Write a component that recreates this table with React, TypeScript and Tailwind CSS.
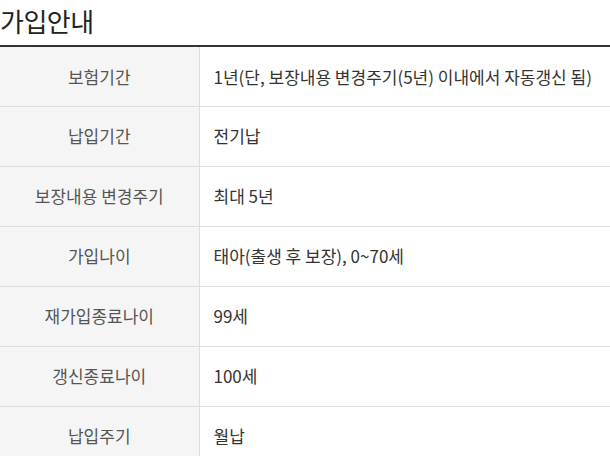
import React from "react";

const rows: [string, string][] = [
  ["보험기간", "1년(단, 보장내용 변경주기(5년) 이내에서 자동갱신 됨)"],
  ["납입기간", "전기납"],
  ["보장내용 변경주기", "최대 5년"],
  ["가입나이", "태아(출생 후 보장), 0~70세"],
  ["재가입종료나이", "99세"],
  ["갱신종료나이", "100세"],
  ["납입주기", "월납"],
];

export default function App() {
  return (
    <div
      className="w-[610px] h-[456px] overflow-hidden bg-white"
      style={{ fontFamily: '"Noto Sans CJK KR", "Noto Sans", sans-serif' }}
    >
      {/* Title */}
      <h2 className="h-[45px] pt-[2px] text-[26px] leading-[38px] text-[#222] tracking-[-0.5px]">
        가입안내
      </h2>

      {/* Info table */}
      <table className="w-full border-collapse border-t-2 border-[#333] text-[17px]">
        <tbody>
          {rows.map(([label, value]) => (
            <tr key={label} className="border-b border-[#ddd]">
              <th className="w-[199px] h-[60px] p-0 bg-[#f5f5f5] border-r border-[#ddd] font-normal text-[#555] text-center">
                {label}
              </th>
              <td className="h-[60px] pl-[14px] text-[#333] whitespace-nowrap">{value}</td>
            </tr>
          ))}
        </tbody>
      </table>
    </div>
  );
}
